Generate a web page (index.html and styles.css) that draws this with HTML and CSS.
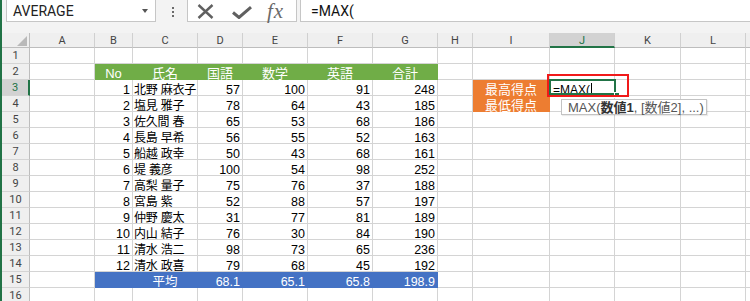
FILE: index.html
```html
<!DOCTYPE html>
<html lang="ja">
<head>
<meta charset="utf-8">
<title>Excel MAX</title>
<link rel="stylesheet" href="styles.css">
</head>
<body>
<div class="app">
  <div class="topbar">
    <div class="namebox"><span>AVERAGE</span><span class="dd"></span></div>
    <div class="dots"><i></i><i></i><i></i></div>
    <div class="fxbox">
      <svg class="ico-x" width="17" height="15" viewBox="0 0 17 15"><path d="M1.5 1 L15.5 14 M15.5 1 L1.5 14" stroke="#606060" stroke-width="2.4" fill="none"/></svg>
      <svg class="ico-ok" width="20" height="13" viewBox="0 0 20 13"><path d="M1 6.5 L7 11.5 L19 1.2" stroke="#606060" stroke-width="3" fill="none"/></svg>
      <span class="fx">fx</span>
    </div>
    <div class="input">=MAX(</div>
  </div>
  <div class="sheet">
    <div class="ch corner"><svg width="10" height="10" viewBox="0 0 10 10"><path d="M10 0 L10 10 L0 10 Z" fill="#b9b9b9"/></svg></div>
    <div class="ch">A</div><div class="ch">B</div><div class="ch">C</div><div class="ch">D</div><div class="ch">E</div><div class="ch">F</div><div class="ch">G</div><div class="ch">H</div><div class="ch">I</div><div class="ch selc">J</div><div class="ch">K</div><div class="ch">L</div><div class="ch"></div>

    <div class="rh">1</div><div class="c"></div><div class="c"></div><div class="c"></div><div class="c"></div><div class="c"></div><div class="c"></div><div class="c"></div><div class="c"></div><div class="c"></div><div class="c"></div><div class="c"></div><div class="c"></div><div class="c"></div>

    <div class="rh">2</div><div class="c"></div><div class="c g ctr">No</div><div class="c g ctr">氏名</div><div class="c g ctr">国語</div><div class="c g ctr">数学</div><div class="c g ctr">英語</div><div class="c g ctr">合計</div><div class="c"></div><div class="c"></div><div class="c"></div><div class="c"></div><div class="c"></div><div class="c"></div>

    <div class="rh selr">3</div><div class="c"></div><div class="c n">1</div><div class="c t">北野 麻衣子</div><div class="c n">57</div><div class="c n">100</div><div class="c n">91</div><div class="c n">248</div><div class="c"></div><div class="c o">最高得点</div><div class="c act">=MAX(<span class="caret"></span><span class="sel"></span><span class="handle"></span></div><div class="c"></div><div class="c"></div><div class="c"></div>

    <div class="rh">4</div><div class="c"></div><div class="c n">2</div><div class="c t">塩見 雅子</div><div class="c n">78</div><div class="c n">64</div><div class="c n">43</div><div class="c n">185</div><div class="c"></div><div class="c o">最低得点</div><div class="c"></div><div class="c"></div><div class="c"></div><div class="c"></div>

    <div class="rh">5</div><div class="c"></div><div class="c n">3</div><div class="c t">佐久間 春</div><div class="c n">65</div><div class="c n">53</div><div class="c n">68</div><div class="c n">186</div><div class="c"></div><div class="c"></div><div class="c"></div><div class="c"></div><div class="c"></div><div class="c"></div>

    <div class="rh">6</div><div class="c"></div><div class="c n">4</div><div class="c t">長島 早希</div><div class="c n">56</div><div class="c n">55</div><div class="c n">52</div><div class="c n">163</div><div class="c"></div><div class="c"></div><div class="c"></div><div class="c"></div><div class="c"></div><div class="c"></div>

    <div class="rh">7</div><div class="c"></div><div class="c n">5</div><div class="c t">船越 政幸</div><div class="c n">50</div><div class="c n">43</div><div class="c n">68</div><div class="c n">161</div><div class="c"></div><div class="c"></div><div class="c"></div><div class="c"></div><div class="c"></div><div class="c"></div>

    <div class="rh">8</div><div class="c"></div><div class="c n">6</div><div class="c t">堤 義彦</div><div class="c n">100</div><div class="c n">54</div><div class="c n">98</div><div class="c n">252</div><div class="c"></div><div class="c"></div><div class="c"></div><div class="c"></div><div class="c"></div><div class="c"></div>

    <div class="rh">9</div><div class="c"></div><div class="c n">7</div><div class="c t">高梨 量子</div><div class="c n">75</div><div class="c n">76</div><div class="c n">37</div><div class="c n">188</div><div class="c"></div><div class="c"></div><div class="c"></div><div class="c"></div><div class="c"></div><div class="c"></div>

    <div class="rh">10</div><div class="c"></div><div class="c n">8</div><div class="c t">宮島 紫</div><div class="c n">52</div><div class="c n">88</div><div class="c n">57</div><div class="c n">197</div><div class="c"></div><div class="c"></div><div class="c"></div><div class="c"></div><div class="c"></div><div class="c"></div>

    <div class="rh">11</div><div class="c"></div><div class="c n">9</div><div class="c t">仲野 慶太</div><div class="c n">31</div><div class="c n">77</div><div class="c n">81</div><div class="c n">189</div><div class="c"></div><div class="c"></div><div class="c"></div><div class="c"></div><div class="c"></div><div class="c"></div>

    <div class="rh">12</div><div class="c"></div><div class="c n">10</div><div class="c t">内山 結子</div><div class="c n">76</div><div class="c n">30</div><div class="c n">84</div><div class="c n">190</div><div class="c"></div><div class="c"></div><div class="c"></div><div class="c"></div><div class="c"></div><div class="c"></div>

    <div class="rh">13</div><div class="c"></div><div class="c n">11</div><div class="c t">清水 浩二</div><div class="c n">98</div><div class="c n">73</div><div class="c n">65</div><div class="c n">236</div><div class="c"></div><div class="c"></div><div class="c"></div><div class="c"></div><div class="c"></div><div class="c"></div>

    <div class="rh">14</div><div class="c"></div><div class="c n">12</div><div class="c t">清水 政喜</div><div class="c n">79</div><div class="c n">68</div><div class="c n">45</div><div class="c n">192</div><div class="c"></div><div class="c"></div><div class="c"></div><div class="c"></div><div class="c"></div><div class="c"></div>

    <div class="rh">15</div><div class="c"></div><div class="c b"></div><div class="c b ctr">平均</div><div class="c b n">68.1</div><div class="c b n">65.1</div><div class="c b n">65.8</div><div class="c b n">198.9</div><div class="c"></div><div class="c"></div><div class="c"></div><div class="c"></div><div class="c"></div><div class="c"></div>

    <div class="rh">16</div><div class="c"></div><div class="c"></div><div class="c"></div><div class="c"></div><div class="c"></div><div class="c"></div><div class="c"></div><div class="c"></div><div class="c"></div><div class="c"></div><div class="c"></div><div class="c"></div><div class="c"></div>

    <div class="annot"></div>
    <div class="tip">MAX(<b>数値1</b>, [数値2], ...)</div>
  </div>
</div>
</body>
</html>
```
FILE: styles.css
```css
html, body {
  margin: 0;
  padding: 0;
  background: #ffffff;
  overflow: hidden;
}

.app {
  width: 750px;
  height: 301px;
  box-sizing: border-box;
  border-left: 2px solid #217346;
  overflow: hidden;
}

/* ---------- formula bar ---------- */
.topbar {
  height: 33px;
  background: #f3f3f3;
  display: flex;
  align-items: flex-start;
}

.namebox {
  margin-left: 4px;
  width: 150px;
  height: 22px;
  box-sizing: border-box;
  background: #fff;
  border: 1px solid #c6c6c6;
  border-top: 0;
  display: flex;
  align-items: center;
  justify-content: space-between;
  padding: 0 7px 0 6px;
  font: 14px Roboto, "Liberation Sans", sans-serif;
  color: #222;
}

.dd {
  width: 0;
  height: 0;
  border-left: 3px solid transparent;
  border-right: 3px solid transparent;
  border-top: 4px solid #555;
}

.dots {
  margin-left: 16px;
  width: 2px;
  padding-top: 7px;
  display: flex;
  flex-direction: column;
  gap: 2px;
}

.dots i {
  display: block;
  width: 2px;
  height: 2px;
  background: #6a6a6a;
}

.fxbox {
  margin-left: 13px;
  width: 110px;
  height: 22px;
  box-sizing: border-box;
  background: #fff;
  border: 1px solid #c6c6c6;
  border-top: 0;
  display: flex;
  align-items: center;
  padding-left: 9px;
}

.ico-x { display: block; margin-top: 1px; }
.ico-ok { display: block; margin-left: 18px; margin-top: 3px; }

.fx {
  margin-left: 15px;
  font: italic 21px "Liberation Serif", serif;
  color: #6a6a6a;
  letter-spacing: 1px;
  line-height: 20px;
}

.input {
  margin-left: 3px;
  flex: 1;
  height: 22px;
  box-sizing: border-box;
  background: #fff;
  border-left: 1px solid #c6c6c6;
  border-bottom: 1px solid #c6c6c6;
  padding-left: 10px;
  display: flex;
  align-items: center;
  font: 14px Roboto, "Liberation Sans", sans-serif;
  color: #111;
}

/* ---------- sheet ---------- */
.sheet {
  position: relative;
  display: grid;
  grid-template-columns: 28px 65px 38px 65px 45px 65px 65px 65px 35px 77px 65px 66px 65px 1fr;
  grid-template-rows: 15px;
  grid-auto-rows: 16px;
  font-family: "Liberation Sans", "Noto Sans CJK JP", sans-serif;
  font-size: 12.5px;
  color: #000;
}

.ch {
  background: #efefef;
  border-right: 1px solid #d0d0d0;
  border-bottom: 1px solid #bdbdbd;
  text-align: center;
  font: 11px Roboto, "Liberation Sans", sans-serif;
  line-height: 15px;
  color: #444;
}

.corner {
  display: flex;
  justify-content: flex-end;
  align-items: flex-end;
  padding: 0 2px 1px 0;
  border-right-color: #bdbdbd;
}

.corner svg { display: block; }

.selc {
  background: #d2d2d2;
  border-bottom: 2px solid #217346;
  color: #217346;
}

.rh {
  background: #efefef;
  border-right: 1px solid #bdbdbd;
  border-bottom: 1px solid #d4d4d4;
  text-align: center;
  font: 11px Roboto, "Liberation Sans", sans-serif;
  line-height: 16px;
  color: #444;
}

.selr {
  background: #d2d2d2;
  border-right: 2px solid #217346;
  color: #217346;
}

.c {
  border-right: 1px solid #d4d4d4;
  border-bottom: 1px solid #d4d4d4;
  padding: 2px 2px 0;
  line-height: 16px;
  white-space: nowrap;
}

.n { text-align: right; }
.ctr { text-align: center; }
.t { padding-left: 1px; font-size: 12px; letter-spacing: -0.2px; }

.g {
  background: #70ad47;
  border-color: #70ad47;
  color: #fff;
  font-size: 13px;
}

.b {
  background: #4472c4;
  border-color: #4472c4;
  color: #fff;
}

.o {
  background: #ed7d31;
  border-color: #ed7d31;
  color: #fff;
  font-size: 13px;
  text-align: center;
}

.act {
  position: relative;
  font-size: 12px;
  padding-left: 3px;
}

.caret {
  display: inline-block;
  width: 1px;
  height: 14px;
  background: #000;
  vertical-align: -3px;
  margin-left: 1px;
}

.sel {
  position: absolute;
  left: -1px;
  top: -1px;
  right: -2px;
  bottom: 0;
  border: 2px solid #217346;
}

.handle {
  position: absolute;
  left: 64px;
  top: 12px;
  width: 6px;
  height: 6px;
  box-sizing: border-box;
  background: #217346;
  border: 1px solid #fff;
}

.annot {
  position: absolute;
  left: 545px;
  top: 41px;
  width: 82px;
  height: 23px;
  box-sizing: border-box;
  border: 2px solid #f01a1a;
}

.tip {
  position: absolute;
  left: 559px;
  top: 66px;
  width: 146px;
  height: 16px;
  box-sizing: border-box;
  background: #fff;
  border: 1px solid #c3c3c3;
  box-shadow: 1px 1px 1px rgba(0, 0, 0, 0.08);
  padding-left: 6px;
  font: 13px "Liberation Sans", "Noto Sans CJK JP", sans-serif;
  line-height: 15px;
  color: #555;
  white-space: nowrap;
}

.tip b { color: #333; }
```
